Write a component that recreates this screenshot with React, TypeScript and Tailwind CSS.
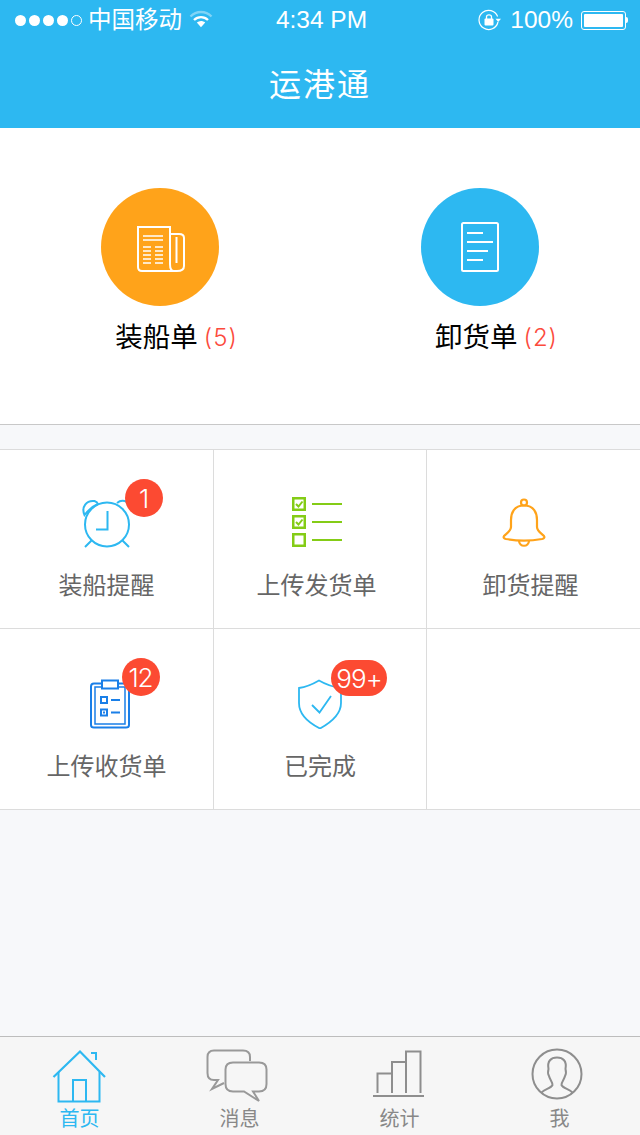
import type { ReactNode } from 'react'

const CJK = "font-['Liberation_Sans','Noto_Sans_CJK_SC',sans-serif]"

function Signal() {
  return (
    <div className="flex items-center gap-[3px]">
      {[0, 1, 2, 3].map((i) => (
        <span key={i} className="w-[11px] h-[11px] rounded-full bg-white" />
      ))}
      <span className="w-[11px] h-[11px] rounded-full border border-white" />
    </div>
  )
}

function Wifi() {
  return (
    <svg width="24" height="20" viewBox="0 0 24 20" fill="none" className="ml-[7px] mt-[-2px]">
      <path d="M1.5 7.5C7.5 1.5 16.5 1.5 22.5 7.5" stroke="#fff" strokeOpacity="0.4" strokeWidth="2.4" />
      <path d="M5 11C9 7.2 15 7.2 19 11" stroke="#fff" strokeWidth="2.4" />
      <path d="M7.8 13.6C10.4 11.6 13.6 11.6 16.2 13.6L12 18.2Z" fill="#fff" />
    </svg>
  )
}

function RotationLock() {
  return (
    <svg width="24" height="22" viewBox="0 0 24 22" fill="none">
      <path d="M19.6 7.5A9.6 9.6 0 1 0 20 13" stroke="#fff" strokeWidth="1.2" />
      <path d="M17.5 9.8H23L20.2 13Z" fill="#fff" />
      <rect x="6.5" y="9.5" width="9" height="7" rx="1" fill="#fff" />
      <path d="M8.5 10V7.8C8.5 5.2 13.5 5.2 13.5 7.8V10" stroke="#fff" strokeWidth="1.3" />
    </svg>
  )
}

function Battery() {
  return (
    <div className="flex items-center ml-[8px]">
      <div className="w-[45px] h-[19px] rounded-[3px] border border-white p-[2px]">
        <div className="w-full h-full rounded-[1px] bg-white" />
      </div>
      <div className="w-[2px] h-[6px] rounded-r-full bg-white" />
    </div>
  )
}

function Newspaper() {
  return (
    <svg width="50" height="48" viewBox="0 0 50 48" fill="none" stroke="#fff" className="ml-[2px] mt-[4px]">
      <path d="M2 2H34V39C34 43 35.500 46 38 46H6C3.500 46 2 44.500 2 42Z" strokeWidth="2" />
      <path d="M34 9H43C46 9 48 10.500 48 13V41C48 44.500 45 46 41 46H38" strokeWidth="2" />
      <path d="M40.500 12V38" strokeWidth="2" />
      <path d="M7 11H27M7 15H27" strokeWidth="1.400" />
      <path d="M7 22H15M19 22H27M7 26H15M19 26H27M7 30H15M19 30H27M7 34H15M19 34H27M7 38H15M19 38H27" strokeWidth="1.500" />
    </svg>
  )
}

function DocIcon() {
  return (
    <svg width="38" height="50" viewBox="0 0 38 50" fill="none" stroke="#fff" strokeWidth="2">
      <rect x="1" y="1" width="36" height="48" rx="1.5" />
      <path d="M6 11H22M6 20H32M6 29H27M6 38H22" />
    </svg>
  )
}

function AlarmClock() {
  return (
    <svg width="50" height="50" viewBox="0 0 50 50" fill="none" stroke="#2db8f1" strokeWidth="2">
      <circle cx="25" cy="26.500" r="22" />
      <path d="M25.500 13V31.500H14" />
      <path d="M2.500 17C-1 9 4.500 2 12.500 3C14 3.500 15.500 4.500 16 6C11 8 6.500 12 2.500 17Z" />
      <path d="M35 5C38 2.500 42 2.500 45 4" />
      <path d="M9.500 42.500L3 49M40.500 42.500L47 49" />
    </svg>
  )
}

function Checklist() {
  return (
    <svg width="52" height="52" viewBox="0 0 52 52" fill="none" stroke="#84cc16" strokeWidth="2">
      <rect x="1.250" y="1.250" width="11.500" height="11.500" strokeWidth="2.500" />
      <path d="M4 7L6.500 9.500L10.500 4.500" />
      <rect x="1.250" y="19.250" width="11.500" height="11.500" strokeWidth="2.500" />
      <path d="M4 25L6.500 27.500L10.500 22.500" />
      <rect x="1.250" y="37.250" width="11.500" height="11.500" strokeWidth="2.500" />
      <path d="M20 7H50M20 25H50M20 43H50" />
    </svg>
  )
}

function Bell() {
  return (
    <svg width="44" height="50" viewBox="0 0 44 50" fill="none" stroke="#ffa31a" strokeWidth="2.200">
      <circle cx="22" cy="4.500" r="3" />
      <path d="M22 7.500C12 7.500 9 15 9 22V29C9 33 5 35 2 38C1 39.500 2 40.500 4 41C15 43 29 43 40 41C42 40.500 43 39.500 42 38C39 35 35 33 35 29V22C35 15 32 7.500 22 7.500Z" />
      <path d="M17 42.500C17 49.500 27 49.500 27 42.500" />
    </svg>
  )
}

function Clipboard() {
  return (
    <svg width="40" height="50" viewBox="0 0 40 50" fill="none" stroke="#1a7fe8">
      <path d="M11 4.500H4C2.500 4.500 1 5.500 1 7.500V46C1 47.500 2 48.500 4 48.500H36C38 48.500 39 47.500 39 46V7.500C39 5.500 38 4.500 36 4.500H29" strokeWidth="2" />
      <path d="M11 8H5V45H35V8H29" strokeWidth="1.500" />
      <rect x="12" y="1.500" width="16" height="8" strokeWidth="2" />
      <rect x="11" y="18" width="6" height="6" strokeWidth="2" />
      <path d="M21 21H30M21 33.500H30" strokeWidth="2" />
      <rect x="11" y="30.500" width="6" height="6" strokeWidth="2" />
      <rect x="13" y="32.500" width="2" height="2" fill="#1a7fe8" stroke="none" />
    </svg>
  )
}

function Shield() {
  return (
    <svg width="46" height="50" viewBox="0 0 46 50" fill="none" stroke="#2db8f1" strokeWidth="1.800">
      <path d="M2 9C10 8 16 5 22 1.500C28 5 36 8 44 9V24C44 36 33 44 23 49.500C12 44 2 36 2 24Z" />
      <path d="M15 26L22.500 33.500L34 17" />
    </svg>
  )
}

function Home() {
  return (
    <svg width="56" height="54" viewBox="0 0 56 54" fill="none" stroke="#2db8f1" strokeWidth="2">
      <path d="M1.500 28L28 2.500L53 28" strokeWidth="2.200" />
      <path d="M6.500 23V52.500H47.500V23" />
      <path d="M21 52.500V31H34V52.500" />
      <path d="M39 4H44V11" />
    </svg>
  )
}

function Chat() {
  return (
    <svg width="62" height="54" viewBox="0 0 62 54" fill="none" stroke="#999" strokeWidth="2" className="-ml-[6px]">
      <path d="M44 12V8C44 3.500 41 1.500 37 1.500H8C3.500 1.500 1.500 4 1.500 8V24C1.500 28.500 3.500 31 8 31H12L6 40L18 34" />
      <path d="M27 13.500H53C58 13.500 60.500 16 60.500 20.500V35C60.500 40 58 42.500 53 42.500H47L53 52L38 42.500H27C22 42.500 19.500 40 19.500 35V20.500C19.500 16 22 13.500 27 13.500Z" />
    </svg>
  )
}

function Bars() {
  return (
    <svg width="52" height="50" viewBox="0 0 52 50" fill="none" stroke="#8e8e8e" strokeWidth="2" className="-ml-[2px] mb-[3px]">
      <path d="M4.500 43V23.500H19V12H33V1.500H47.500V43" />
      <path d="M19 23.500V43M33 12V43" />
      <path d="M0 46H51" strokeWidth="2.200" />
    </svg>
  )
}

function Profile() {
  return (
    <svg width="52" height="52" viewBox="0 0 52 52" fill="none" stroke="#8e8e8e" strokeWidth="2" className="-ml-[7px] mb-[3px]">
      <circle cx="26" cy="26" r="24.500" />
      <path d="M10 45C13 41 20 40.500 21.500 37C22 34.500 18.500 31 18 28C16.500 26 17 23 17.500 21C16 13 20 9.500 26 9.500C32 9.500 36 13 34.500 21C35 23 35.500 26 34 28C33.500 31 30 34.500 30.500 37C32 40.500 39 41 42 45" />
    </svg>
  )
}

function Badge({ children, className }: { children: ReactNode; className: string }) {
  return (
    <span className={`absolute rounded-full bg-[#fc4a32] flex items-center justify-center text-white font-['Inter',sans-serif] font-light text-[26px] tracking-[-1px] ${className}`}>
      {children}
    </span>
  )
}

function Shortcut({ icon, label, count, bg }: { icon: ReactNode; label: string; count: number; bg: string }) {
  return (
    <div className="flex flex-col items-center">
      <div className={`w-[118px] h-[118px] rounded-full flex items-center justify-center ${bg}`}>{icon}</div>
      <div className="flex items-center mt-[12px] h-[40px] ml-[33px]">
        <span className="text-[27.500px] text-black">{label}</span>
        <span className="text-[24px] text-[#fc4a3c] font-['Inter',sans-serif] font-light ml-[6px] tracking-[1px]">({count})</span>
      </div>
    </div>
  )
}

type CellProps = {
  icon?: ReactNode
  label?: string
  badge?: ReactNode
  className?: string
  iconClass?: string
}

function Cell({ icon, label, badge, className = '', iconClass = '' }: CellProps) {
  return (
    <div className={`flex flex-col items-center border-r border-[#dcdcdc] ${className}`}>
      {icon && (
        <div className={`relative h-[56px] flex items-center justify-center ${iconClass}`}>
          {icon}
          {badge}
        </div>
      )}
      {label && <span className="mt-[17px] text-[24px] leading-[36px] text-[#666]">{label}</span>}
    </div>
  )
}

function Tab({ icon, label, active }: { icon: ReactNode; label: string; active?: boolean }) {
  return (
    <div className="flex flex-col items-center">
      <div className="h-[66px] flex items-end justify-center">{icon}</div>
      <span className={`text-[20px] leading-[30px] mt-[1px] -ml-[1px] ${active ? 'text-[#2db8f1]' : 'text-[#888]'}`}>{label}</span>
    </div>
  )
}

export default function App() {
  return (
    <div className={`w-[640px] h-[1135px] flex flex-col bg-[#f7f8fa] overflow-hidden ${CJK}`}>
      <header className="h-[128px] shrink-0 bg-[#2db8f1] text-white">
        <div className="h-[40px] flex items-center justify-between pl-[15px] pr-[12px]">
          <div className="w-[235px] flex items-center">
            <Signal />
            <span className="ml-[6px] mt-[2px] text-[23.500px] leading-none">中国移动</span>
            <Wifi />
          </div>
          <span className="text-[24.500px] leading-none">4:34 PM</span>
          <div className="w-[235px] flex items-center justify-end">
            <RotationLock />
            <span className="ml-[8px] text-[24.500px] leading-none">100%</span>
            <Battery />
          </div>
        </div>
        <h1 className="h-[88px] flex items-center justify-center pt-[1px] text-[32px] tracking-[2px] font-normal">运港通</h1>
      </header>

      <section className="h-[297px] shrink-0 bg-white border-b border-[#c8c8c8] grid grid-cols-2 pt-[60px] justify-items-center">
        <Shortcut bg="bg-[#ffa31a]" icon={<Newspaper />} label="装船单" count={5} />
        <Shortcut bg="bg-[#2db8f1]" icon={<DocIcon />} label="卸货单" count={2} />
      </section>

      <section className="mt-[24px] shrink-0 grid grid-cols-[214px_213px_213px] grid-rows-[179px_181px] bg-white border-t border-[#dcdcdc] [&>div]:border-b [&>div]:border-b-[#dcdcdc]">
        <Cell
          className="pt-[45px]"
          icon={<AlarmClock />}
          label="装船提醒"
          badge={<Badge className="top-[-16px] left-[43px] w-[38px] h-[38px]">1</Badge>}
        />
        <Cell className="pt-[45px] pr-[7px]" iconClass="ml-[3px]" icon={<Checklist />} label="上传发货单" />
        <Cell className="pt-[45px] pr-[6px] border-r-0" iconClass="mr-[14px]" icon={<Bell />} label="卸货提醒" />
        <Cell
          className="pt-[47px]"
          iconClass="ml-[6px]"
          icon={<Clipboard />}
          label="上传收货单"
          badge={<Badge className="top-[-18px] left-[32px] w-[38px] h-[38px]">12</Badge>}
        />
        <Cell
          className="pt-[47px]"
          icon={<Shield />}
          label="已完成"
          badge={<Badge className="top-[-16px] left-[34px] w-[56px] h-[36px]">99+</Badge>}
        />
        <Cell className="border-r-0" />
      </section>

      <nav className="mt-auto h-[99px] shrink-0 bg-[#f6f6f6] border-t border-[#bdbdbd] grid grid-cols-4">
        <Tab icon={<Home />} label="首页" active />
        <Tab icon={<Chat />} label="消息" />
        <Tab icon={<Bars />} label="统计" />
        <Tab icon={<Profile />} label="我" />
      </nav>
    </div>
  )
}
